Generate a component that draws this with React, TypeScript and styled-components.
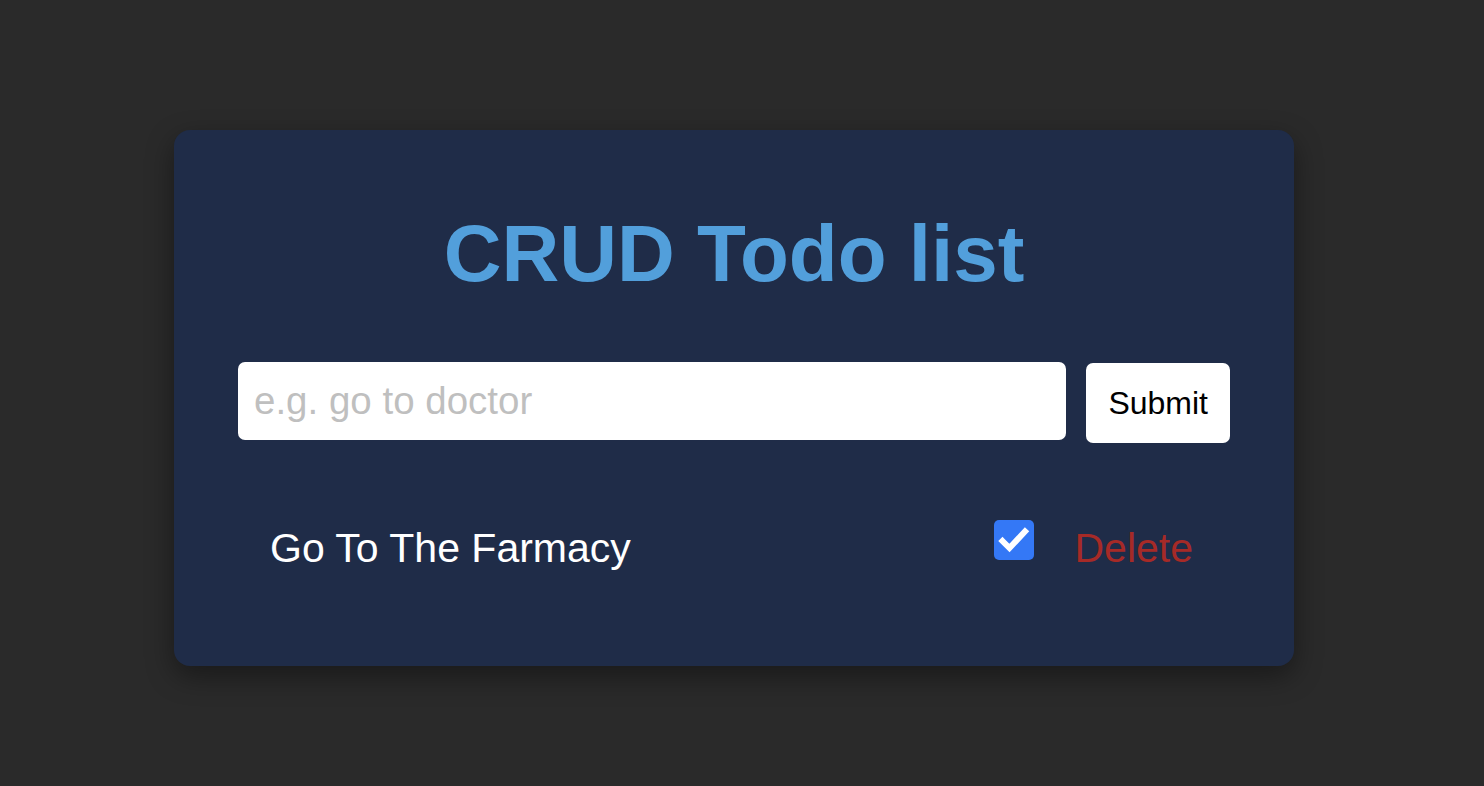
import React, { useState } from "react";
import styled, { createGlobalStyle } from "styled-components";

const GlobalStyle = createGlobalStyle`
	* {
		box-sizing: border-box;
	}
	body {
		margin: 0;
		background-color: #2a2a2a;
		font-family: "Liberation Sans", Arial, Helvetica, sans-serif;
	}
`;

const Page = styled.div`
	min-height: 100vh;
	display: flex;
	justify-content: center;
	align-items: flex-start;
	padding: 130px 16px 0 0;
`;

const Card = styled.div`
	width: 1120px;
	background-color: #1f2c48;
	border-radius: 16px;
	box-shadow: 0 10px 28px rgba(0, 0, 0, 0.4);
	padding: 78px 64px 90px;
	display: flex;
	flex-direction: column;
`;

const Title = styled.h1`
	margin: 0;
	font-size: 80px;
	line-height: 92px;
	font-weight: 700;
	color: #529fdb;
	text-align: center;
`;

const Form = styled.form`
	margin-top: 62px;
	display: flex;
	align-items: flex-start;
	gap: 20px;
`;

const Input = styled.input`
	flex: 1;
	height: 78px;
	border: none;
	border-radius: 7px;
	padding: 0 16px;
	font-family: inherit;
	font-size: 38.5px;
	color: #000;
	background: #fff;
	outline: none;

	&::placeholder {
		color: #bfbfbf;
	}
`;

const SubmitButton = styled.button`
	height: 80px;
	margin-top: 1px;
	padding: 0 22px;
	border: none;
	border-radius: 7px;
	background: #fff;
	color: #000;
	font-family: inherit;
	font-size: 32px;
	cursor: pointer;
`;

const List = styled.ul`
	list-style: none;
	margin: 77px 0 0;
	padding: 0;
`;

const Item = styled.li`
	display: flex;
	align-items: flex-start;
	padding: 0 37px 0 32px;
`;

const ItemText = styled.span<{ $done?: boolean }>`
	flex: 1;
	font-size: 41px;
	line-height: 56px;
	color: #fff;
`;

const Check = styled.button<{ $checked: boolean }>`
	width: 40px;
	height: 40px;
	padding: 0;
	border: none;
	border-radius: 5px;
	background: ${(p) => (p.$checked ? "#3478f6" : "#fff")};
	display: flex;
	align-items: center;
	justify-content: center;
	cursor: pointer;
	margin-right: 40px;
`;

const DeleteButton = styled.button`
	border: none;
	background: none;
	padding: 0;
	font-family: inherit;
	font-size: 41px;
	line-height: 56px;
	color: #a62a27;
	cursor: pointer;
`;

export default function App() {
	const [todos, setTodos] = useState([
		{ id: 1, text: "Go To The Farmacy", done: true },
	]);
	const [value, setValue] = useState("");

	const submit = (e: React.FormEvent) => {
		e.preventDefault();
		if (!value.trim()) return;
		setTodos([...todos, { id: Date.now(), text: value, done: false }]);
		setValue("");
	};

	return (
		<Page>
			<GlobalStyle />
			<Card>
				<Title>CRUD Todo list</Title>
				<Form onSubmit={submit}>
					<Input
						placeholder="e.g. go to doctor"
						value={value}
						onChange={(e) => setValue(e.target.value)}
					/>
					<SubmitButton type="submit">Submit</SubmitButton>
				</Form>
				<List>
					{todos.map((todo) => (
						<Item key={todo.id}>
							<ItemText $done={todo.done}>{todo.text}</ItemText>
							<Check
								type="button"
								$checked={todo.done}
								onClick={() =>
									setTodos(
										todos.map((t) =>
											t.id === todo.id ? { ...t, done: !t.done } : t
										)
									)
								}
							>
								{todo.done && (
									<svg width="40" height="40" viewBox="0 0 40 40">
										<polyline
											points="8.5,21 15.5,28 31,11.5"
											fill="none"
											stroke="#fff"
											strokeWidth="6"
											strokeLinecap="square"
										/>
									</svg>
								)}
							</Check>
							<DeleteButton
								type="button"
								onClick={() => setTodos(todos.filter((t) => t.id !== todo.id))}
							>
								Delete
							</DeleteButton>
						</Item>
					))}
				</List>
			</Card>
		</Page>
	);
}
